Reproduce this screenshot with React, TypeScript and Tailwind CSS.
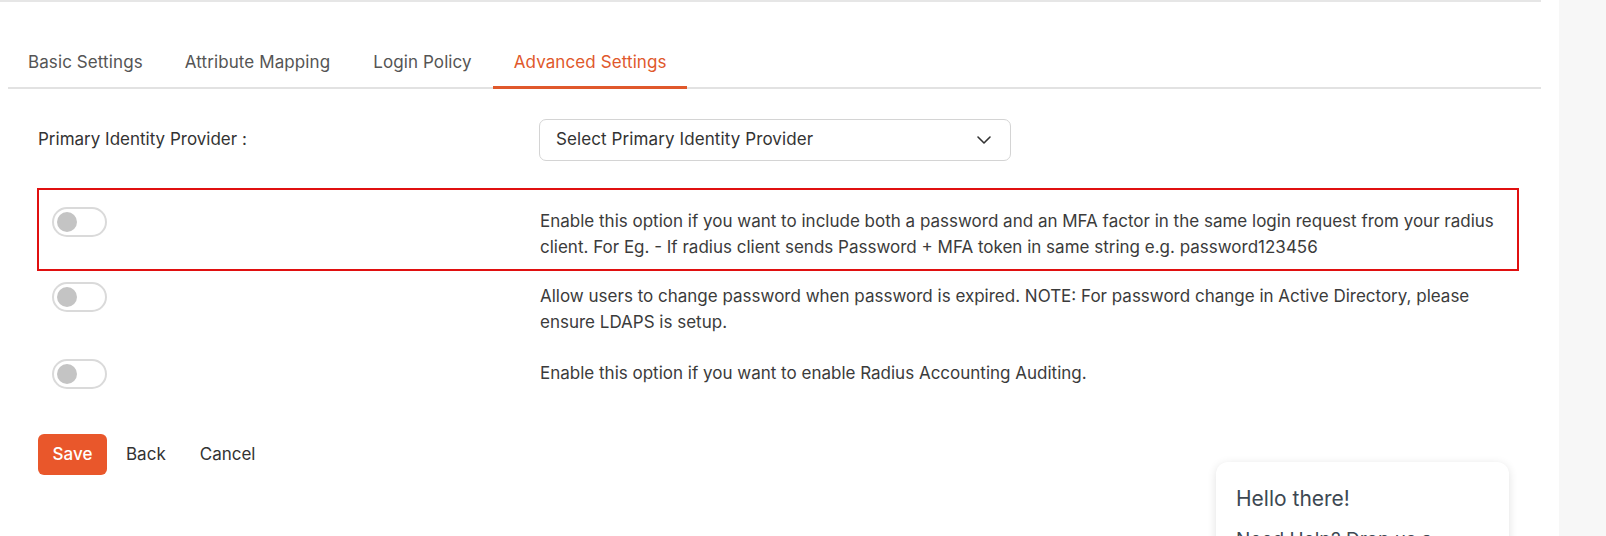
import React from "react";

const font = { fontFamily: "Inter, 'Noto Sans', sans-serif" };

function Toggle() {
  return (
    <div className="mt-[-1px] flex h-[30px] w-[55px] shrink-0 items-center rounded-full border-2 border-[#dadada] bg-white pl-[3px]">
      <div className="h-[20px] w-[20px] rounded-full bg-[#c4c4c4]" />
    </div>
  );
}

function Row({
  boxed,
  children,
  className,
}: {
  boxed?: boolean;
  children: React.ReactNode;
  className: string;
}) {
  return (
    <div
      className={
        "flex border-2 pl-[13px] " +
        (boxed ? "border-[#e01010] " : "border-transparent ") +
        className
      }
    >
      <div className="w-[488px] shrink-0">
        <Toggle />
      </div>
      <p className="w-[966px] text-[17px] leading-[26px] text-[#3b3b3b]">{children}</p>
    </div>
  );
}

export default function App() {
  const tabs = ["Basic Settings", "Attribute Mapping", "Login Policy", "Advanced Settings"];
  const pads = ["pl-[20px] pr-[21px]", "px-[21px]", "pl-[22px] pr-[21px]", "pl-[21px] pr-[20px]"];
  return (
    <div className="relative flex h-[536px] w-[1606px] overflow-hidden bg-white" style={font}>
      <div className="w-[1559px] shrink-0">
        <div className="h-[2px] w-[1541px] bg-[#e6e6e6]" />
        <div className="ml-[8px] mt-[34px] flex w-[1533px] border-b-2 border-[#e2e2e2]">
          {tabs.map((t, i) => (
            <div
              key={t}
              className={
                "-mb-[2px] pb-[12px] pt-[14px] text-[17px] leading-[24px] tracking-[0.1px] border-b-[3px] " +
                pads[i] +
                " " +
                (i === 3 ? "border-[#e0582b] text-[#e0582b]" : "border-transparent text-[#555555]")
              }
            >
              {t}
            </div>
          ))}
        </div>

        <div className="ml-[38px] mt-[30px] flex items-center">
          <div className="w-[501px] text-[17px] text-[#333333]">Primary Identity Provider :</div>
          <div className="flex h-[42px] w-[472px] items-center justify-between rounded-[7px] border border-[#d4d4d4] pl-[16px] pr-[18px] text-[17px] tracking-[0.1px] text-[#333333]">
            <span>Select Primary Identity Provider</span>
            <svg width="16" height="10" viewBox="0 0 16 10" fill="none">
              <path d="M2 2l6 6 6-6" stroke="#333" strokeWidth="1.6" strokeLinecap="round" strokeLinejoin="round" />
            </svg>
          </div>
        </div>

        <div className="ml-[37px] mt-[27px] flex w-[1482px] flex-col">
          <Row boxed className="pb-[9px] pt-[18px]">
            Enable this option if you want to include both a password and an MFA factor in the same login request from your radius client. For Eg. - If radius client sends Password + MFA token in same string e.g. password123456
          </Row>
          <Row className="pb-[8px] pt-[10px]">
            Allow users to change password when password is expired. NOTE: For password change in Active Directory, please ensure LDAPS is setup.
          </Row>
          <Row className="pb-[8px] pt-[13px]">
            Enable this option if you want to enable Radius Accounting Auditing.
          </Row>
        </div>

        <div className="ml-[38px] mt-[35px] flex items-center text-[17px]">
          <button className="h-[41px] w-[69px] rounded-[6px] bg-[#e9572b] font-medium text-white">Save</button>
          <button className="ml-[2px] h-[41px] px-[17px] text-[#333333]">Back</button>
          <button className="h-[41px] px-[17px] text-[#333333]">Cancel</button>
        </div>
      </div>
      <div className="flex-1 bg-[#f7f7f7]" />

      <div className="absolute left-[1216px] top-[462px] h-[120px] w-[293px] rounded-[12px] bg-white px-[20px] pt-[24px] shadow-[0_2px_10px_rgba(0,0,0,0.12)]">
        <div className="text-[21px] leading-[26px] text-[#3d4852]">Hello there!</div>
        <div className="mt-[14px] text-[19px] text-[#3d4852]">Need Help? Drop us a message</div>
      </div>
    </div>
  );
}
